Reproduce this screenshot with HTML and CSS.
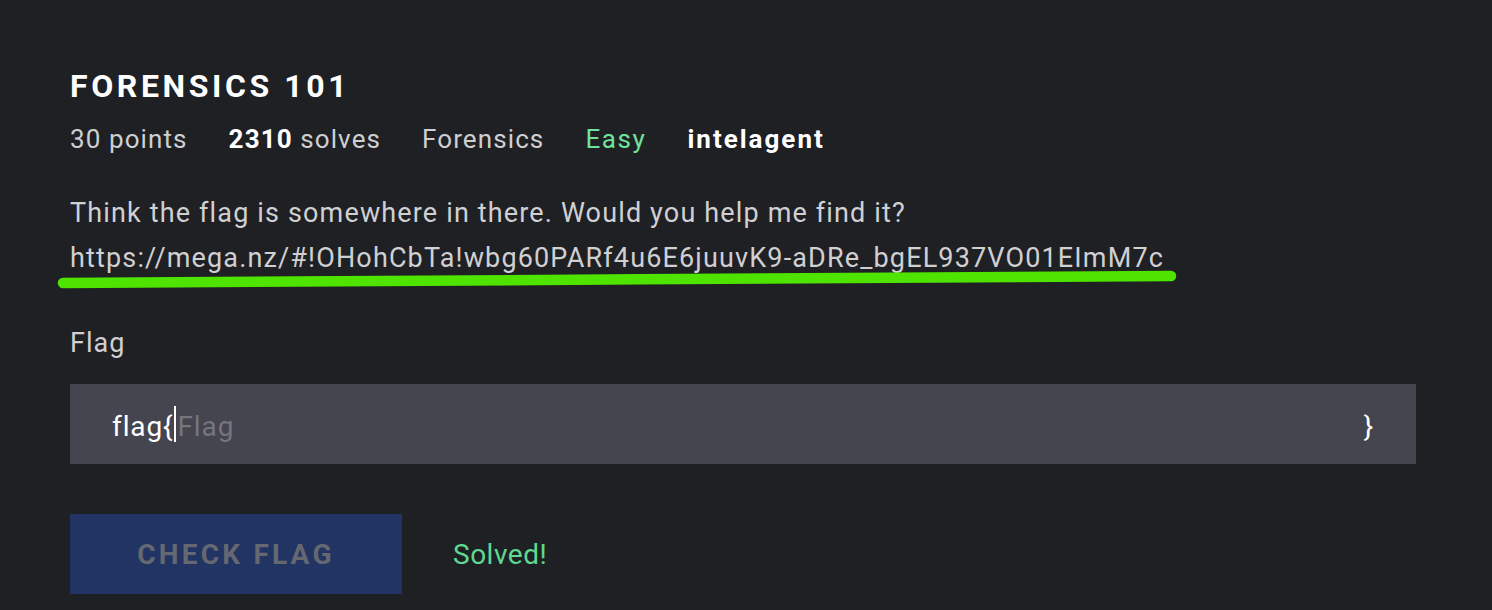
FILE: index.html
```html
<!DOCTYPE html>
<html>
<head>
<meta charset="utf-8">
<link rel="stylesheet" href="styles.css">
</head>
<body>
<main class="challenge">
  <h1 class="title">FORENSICS 101</h1>
  <div class="meta">
    <span class="meta-item">30 points</span>
    <span class="meta-item"><b>2310</b> solves</span>
    <span class="meta-item">Forensics</span>
    <span class="meta-item easy">Easy</span>
    <span class="meta-item author">intelagent</span>
  </div>
  <div class="desc">
    <p class="desc-line">Think the flag is somewhere in there. Would you help me find it?</p>
    <p class="desc-line link-line">https://mega.nz/#!OHohCbTa!wbg60PARf4u6E6juuvK9-aDRe_bgEL937VO01EImM7c<svg class="scribble" width="1130" height="24" viewBox="0 0 1130 24"><path d="M6 14 C300 12 800 9 1114 7" stroke="#4fe400" stroke-width="10.5" stroke-linecap="round" fill="none"/></svg></p>
  </div>
  <label class="label">Flag</label>
  <div class="input">
    <span class="prefix">flag{</span><span class="caret"></span><span class="placeholder">Flag</span>
    <span class="suffix">}</span>
  </div>
  <div class="actions">
    <button class="btn">CHECK FLAG</button>
    <span class="solved">Solved!</span>
  </div>
</main>
</body>
</html>
```
FILE: styles.css
```css
html, body {
  margin: 0;
  background: #1f2024;
  height: 100%;
}
body {
  font-family: Roboto, "Liberation Sans", sans-serif;
  color: #d6d6d8;
  overflow: hidden;
}
.challenge {
  padding: 66px 76px 0 70px;
}
.title {
  margin: 0;
  font-size: 32px;
  font-weight: 700;
  letter-spacing: 3.6px;
  color: #ffffff;
  line-height: 40px;
}
.meta {
  display: flex;
  gap: 41px;
  font-size: 26px;
  letter-spacing: 1.1px;
  line-height: 32px;
  margin-top: 17px;
  color: #cfcfd2;
}
.meta b { color: #fff; font-weight: 700; }
.easy { color: #6ee39e; letter-spacing: 1.6px; }
.author { color: #fff; font-weight: 700; letter-spacing: 2px; }
.desc {
  margin-top: 36px;
  font-size: 27px;
  letter-spacing: 1.15px;
  line-height: 45px;
  color: #d0d0d3;
}
.desc-line { margin: 0; }
.link-line { position: relative; }
.scribble {
  position: absolute;
  left: -13px;
  top: 33px;
}
.label {
  display: block;
  margin-top: 46px;
  font-size: 27px;
  letter-spacing: 1px;
  line-height: 32px;
  color: #d0d0d3;
}
.input {
  margin-top: 25px;
  height: 80px;
  background: #44454f;
  display: flex;
  align-items: center;
  padding: 4px 42px 0;
  box-sizing: border-box;
  font-size: 28px;
  letter-spacing: 0.9px;
  color: #ffffff;
}
.caret {
  width: 2px;
  height: 36px;
  background: #ffffff;
  margin: 0 1px 4px 1px;
}
.placeholder { color: #74757d; }
.suffix { margin-left: auto; }
.actions {
  margin-top: 50px;
  display: flex;
  align-items: center;
  gap: 51px;
}
.btn {
  width: 332px;
  height: 80px;
  border: 0;
  background: #223463;
  color: #656870;
  font-family: inherit;
  font-size: 28px;
  font-weight: 700;
  letter-spacing: 3.2px;
  padding: 0;
}
.solved {
  font-size: 28px;
  letter-spacing: 0.5px;
  color: #5fd890;
}
```
